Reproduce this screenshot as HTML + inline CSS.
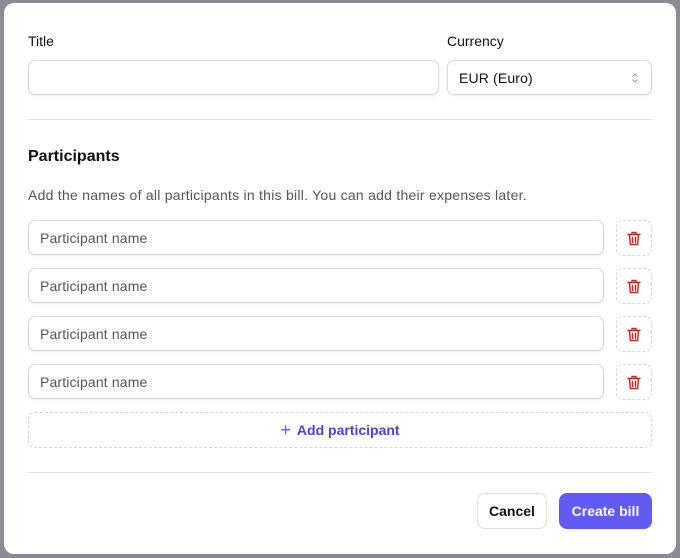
<!DOCTYPE html>
<html><head><style>
*{box-sizing:border-box;margin:0;padding:0}
body{width:680px;height:558px;background:#8b8b96;font-family:"Liberation Sans",sans-serif;position:relative;overflow:hidden}
.m{position:absolute;left:4px;top:3px;width:672px;height:551px;background:#fff;border-radius:10px}
.a{position:absolute}
.lbl{font-size:14px;color:#111;font-weight:500}
.inp{border:1px solid #d9d9de;border-radius:7px;box-shadow:0 1px 2px rgba(0,0,0,.08);background:#fff;font-size:14px;color:#555;padding-left:11px;display:flex;align-items:center;letter-spacing:.15px}
.tr{border:1px dashed #d6d6da;border-radius:7px;display:flex;align-items:center;justify-content:center}
.hr{height:1px;background:#e2e2e6}
</style></head><body>
<div class="m"></div>
<div class="a lbl" style="left:28px;top:33px">Title</div>
<div class="a lbl" style="left:447px;top:33px">Currency</div>
<div class="a inp" style="left:28px;top:60px;width:411px;height:35px"></div>
<div class="a inp" style="left:447px;top:60px;width:205px;height:35px;color:#111">EUR (Euro)<svg style="position:absolute;right:12px;top:11px" width="8" height="12" viewBox="0 0 8 12" fill="none" stroke="#999" stroke-width="1"><path d="M1.5 4.5L4 2l2.5 2.5M1.5 7.5L4 10l2.5-2.5"/></svg></div>
<div class="a hr" style="left:28px;top:119px;width:624px"></div>
<div class="a" style="left:28px;top:148px;font-size:16px;font-weight:bold;color:#111">Participants</div>
<div class="a" style="left:28px;top:187px;font-size:14px;color:#555;letter-spacing:.25px">Add the names of all participants in this bill. You can add their expenses later.</div>
<div class="a inp" style="left:28px;top:220px;width:576px;height:35px">Participant name</div>
<div class="a inp" style="left:28px;top:268px;width:576px;height:35px">Participant name</div>
<div class="a inp" style="left:28px;top:316px;width:576px;height:35px">Participant name</div>
<div class="a inp" style="left:28px;top:364px;width:576px;height:35px">Participant name</div>
<div class="a tr" style="left:616px;top:220px;width:36px;height:36px"><svg width="14" height="15" viewBox="0 0 14 15" fill="none" stroke="#c0262d" stroke-width="1.4" stroke-linecap="round"><path d="M1 3.5h12M5 3.5V1.5h4v2M2.5 3.5l.8 10h7.4l.8-10M5.5 6.5v5M8.5 6.5v5"/></svg></div>
<div class="a tr" style="left:616px;top:268px;width:36px;height:36px"><svg width="14" height="15" viewBox="0 0 14 15" fill="none" stroke="#c0262d" stroke-width="1.4" stroke-linecap="round"><path d="M1 3.5h12M5 3.5V1.5h4v2M2.5 3.5l.8 10h7.4l.8-10M5.5 6.5v5M8.5 6.5v5"/></svg></div>
<div class="a tr" style="left:616px;top:316px;width:36px;height:36px"><svg width="14" height="15" viewBox="0 0 14 15" fill="none" stroke="#c0262d" stroke-width="1.4" stroke-linecap="round"><path d="M1 3.5h12M5 3.5V1.5h4v2M2.5 3.5l.8 10h7.4l.8-10M5.5 6.5v5M8.5 6.5v5"/></svg></div>
<div class="a tr" style="left:616px;top:364px;width:36px;height:36px"><svg width="14" height="15" viewBox="0 0 14 15" fill="none" stroke="#c0262d" stroke-width="1.4" stroke-linecap="round"><path d="M1 3.5h12M5 3.5V1.5h4v2M2.5 3.5l.8 10h7.4l.8-10M5.5 6.5v5M8.5 6.5v5"/></svg></div>
<div class="a tr" style="left:28px;top:412px;width:624px;height:36px;color:#4f3fd8;font-size:14px;font-weight:bold"><span style="font-weight:normal;font-size:18px;margin-right:6px;color:#6a5ae0">+</span>Add participant</div>
<div class="a hr" style="left:28px;top:472px;width:624px"></div>
<div class="a" style="left:477px;top:493px;width:70px;height:36px;border:1px solid #e0e0e4;border-radius:8px;display:flex;align-items:center;justify-content:center;font-size:14px;font-weight:bold;color:#111">Cancel</div>
<div class="a" style="left:559px;top:493px;width:93px;height:36px;background:#615af5;border-radius:8px;display:flex;align-items:center;justify-content:center;font-size:14px;font-weight:bold;color:#fff">Create bill</div>
</body></html>
